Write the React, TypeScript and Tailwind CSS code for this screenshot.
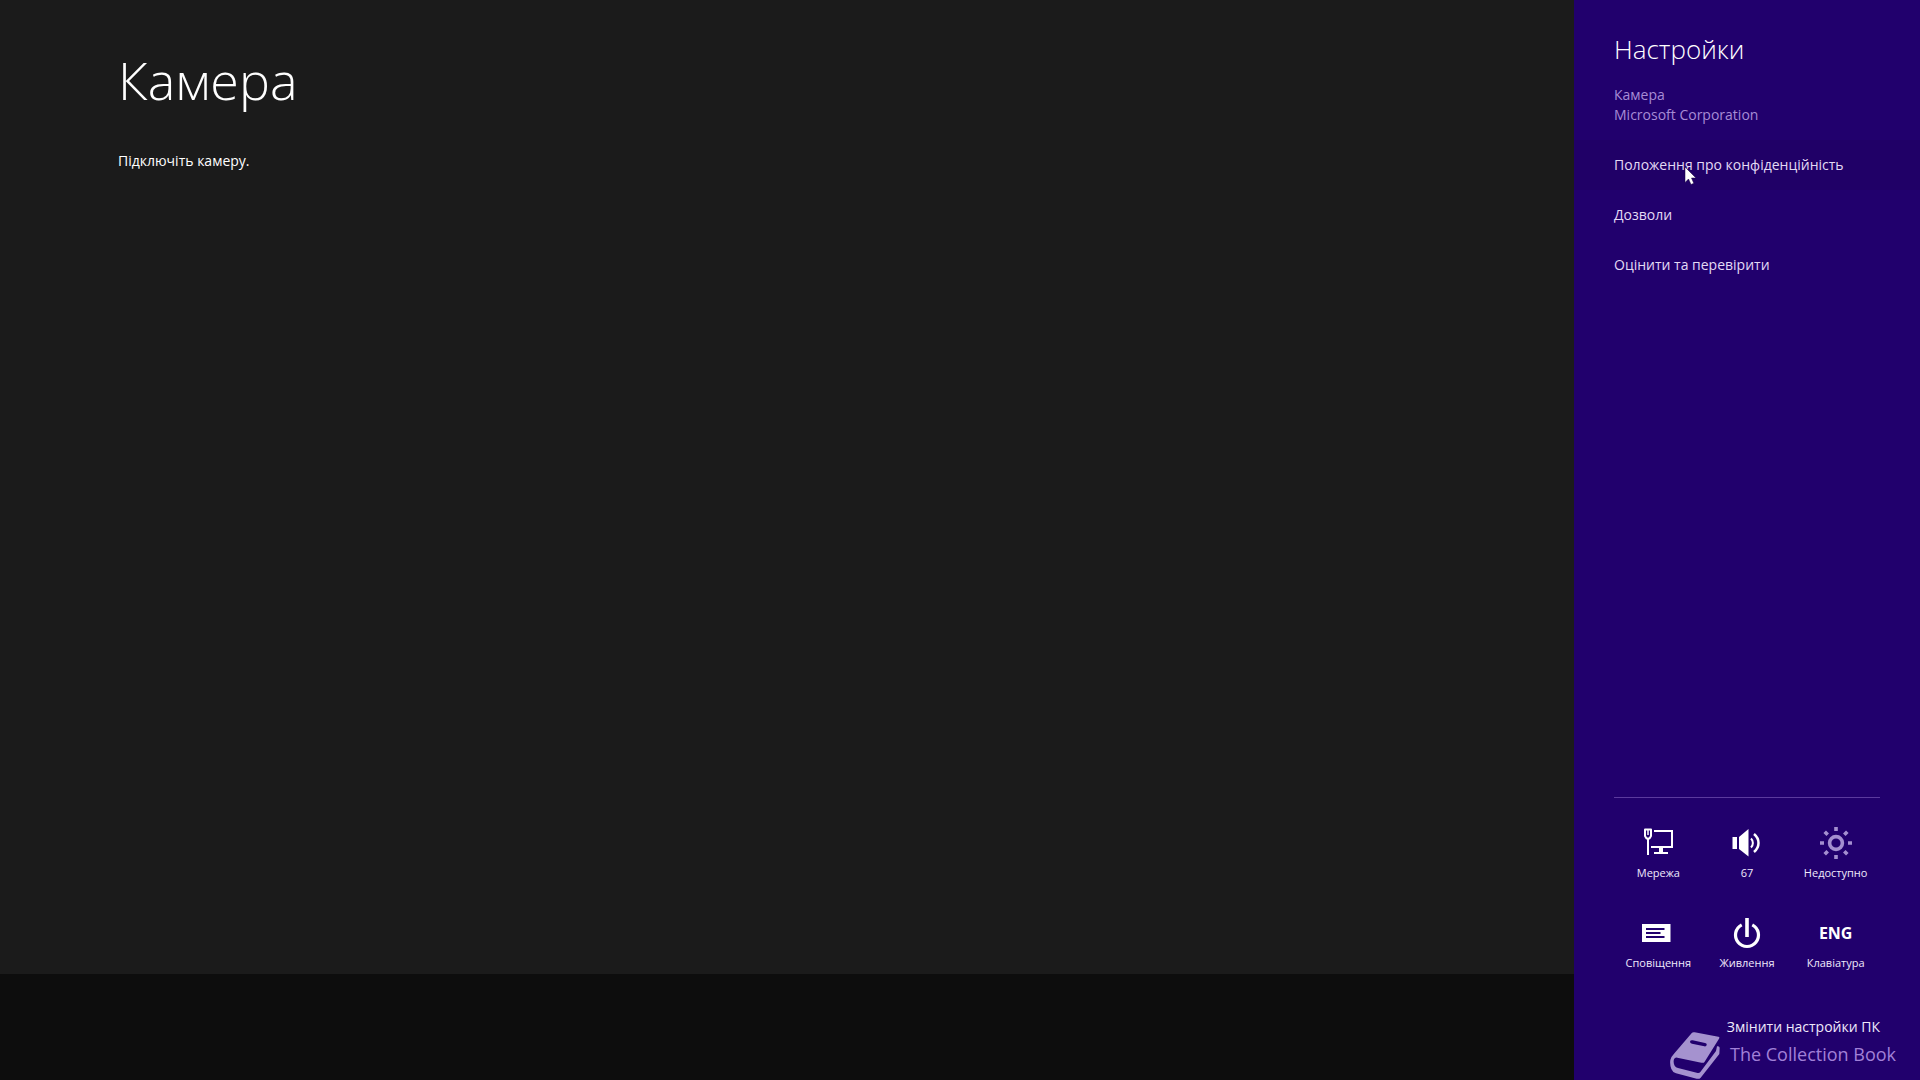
import type { ReactNode } from "react";

const links = ["Положення про конфіденційність", "Дозволи", "Оцінити та перевірити"];

function NetworkIcon() {
  return (
    <svg width="32" height="32" viewBox="0 0 32 32" fill="none" stroke="currentColor" strokeWidth="2" aria-hidden="true">
      <path d="M12 4H30V20H9" />
      <path d="M19 20V25" strokeWidth="4" />
      <path d="M12 26H26" />
      <path d="M6 12V28" />
      <path d="M3 2.500H9V9L7.500 11.500H4.500L3 9Z" strokeLinejoin="round" />
      <path d="M6 3V8" strokeWidth="1.500" />
    </svg>
  );
}

function VolumeIcon() {
  return (
    <svg width="32" height="32" viewBox="0 0 32 32" fill="none" stroke="currentColor" strokeWidth="2" aria-hidden="true">
      <path d="M1.500 10H6V22H1.500Z" fill="currentColor" stroke="none" />
      <path d="M8 10L17.500 2V29.500L8 22Z" fill="currentColor" stroke="none" />
      <path d="M20 11.500C22.500 14 22.500 18 20 20.500" />
      <path d="M23 7C29 12 29 20 23 25" strokeWidth="2.500" />
    </svg>
  );
}

function BrightnessIcon() {
  return (
    <svg width="32" height="32" viewBox="0 0 32 32" fill="none" stroke="currentColor" strokeWidth="3.600" aria-hidden="true">
      <circle cx="16" cy="16" r="6.400" />
      <path d="M16 0V4M16 28V32M0 16H4M28 16H32M4.700 4.700L7.700 7.700M24.300 24.300L27.300 27.300M4.700 27.300L7.700 24.300M24.300 7.700L27.300 4.700" />
    </svg>
  );
}

function NotificationsIcon() {
  return (
    <svg width="32" height="32" viewBox="0 0 32 32" aria-hidden="true">
      <path d="M0 7H28.500V25H0Z" fill="currentColor" />
      <path d="M4 12H22.500M4 16H18.500M4 20H22.500" stroke="#21006d" strokeWidth="2" />
    </svg>
  );
}

function PowerIcon() {
  return (
    <svg width="32" height="32" viewBox="0 0 32 32" fill="none" stroke="currentColor" strokeWidth="3.200" aria-hidden="true">
      <path d="M16 1V20" strokeWidth="3.600" />
      <path d="M10.700 7.800A11.500 11.500 0 1 0 21.300 7.800" />
    </svg>
  );
}

function BookIcon() {
  return (
    <svg width="50" height="48" viewBox="0 0 150 144" fill="currentColor" aria-hidden="true">
      <path
        fillRule="evenodd"
        d="M66 2Q68 0 74 1L145 14Q150 15 147 20L104 89Q101 94 94 92L22 77Q14 76 12 82Q9 92 14 101Q17 106 24 108L83 123Q88 124 91 120L138 57L141 43Q148 41 149 47L148 66L92 137Q87 142 80 140L18 124Q8 121 4 111Q-1 98 1 84Q3 74 12 65ZM68 25Q61 24 60 29Q60 34 66 35L103 43Q109 44 110 39Q111 34 105 33Z"
      />
    </svg>
  );
}

function Tile({ label, children, dim = false }: { label: string; children: ReactNode; dim?: boolean }) {
  return (
    <button type="button" disabled={dim} className="flex h-[90px] flex-col items-center gap-1">
      <span className={dim ? "flex h-8 items-center text-[#a48fd0]" : "flex h-8 items-center text-white"}>{children}</span>
      <span className="text-[11px] leading-5 text-[#f0eafc]">{label}</span>
    </button>
  );
}

export default function App() {
  return (
    <div className="flex min-h-screen bg-[#1b1b1b] font-['Open_Sans','Noto_Sans',sans-serif] text-white">
      <div className="flex min-w-0 flex-1 flex-col">
        <main className="flex-1 px-[118px] pt-11">
          <h1 className="text-[52px] leading-[71px] font-light">Камера</h1>
          <p className="mt-9 text-[14px] leading-5">Підключіть камеру.</p>
        </main>
        <footer className="h-[106px] bg-[#0d0d0d]" />
      </div>

      <aside className="relative flex w-[346px] shrink-0 flex-col bg-[#21006d]">
        <header className="px-10 pt-[31px]">
          <h2 className="text-[26px] leading-9 font-light text-white">Настройки</h2>
          <p className="mt-[18px] text-[14px] leading-5 text-[#a78cd6]">
            Камера
            <br />
            Microsoft Corporation
          </p>
        </header>

        <nav className="mt-[15px] flex flex-col">
          {links.map((label, i) => (
            <a
              key={label}
              href="#"
              className={
                i === 0
                  ? "relative bg-[#200067] px-10 py-[15px] text-[14px] leading-5 text-[#e3daf5]"
                  : "px-10 py-[15px] text-[14px] leading-5 text-[#e3daf5]"
              }
            >
              {label}
              {i === 0 && (
                <svg
                  className="absolute top-[26px] left-[110px]"
                  width="13"
                  height="20"
                  viewBox="0 0 13 20"
                  fill="#fff"
                  stroke="#16003f"
                  strokeWidth="0.500"
                  aria-hidden="true"
                >
                  <path d="M1 1V16.500L4.500 13L7 18.500L9.800 17.300L7.500 12H12Z" />
                </svg>
              )}
            </a>
          ))}
        </nav>

        <section className="mx-10 mt-auto border-t border-[#5b3a9e] pt-[29px]">
          <div className="grid grid-cols-3">
            <Tile label="Мережа"><NetworkIcon /></Tile>
            <Tile label="67"><VolumeIcon /></Tile>
            <Tile label="Недоступно" dim><BrightnessIcon /></Tile>
            <Tile label="Сповіщення"><NotificationsIcon /></Tile>
            <Tile label="Живлення"><PowerIcon /></Tile>
            <Tile label="Клавіатура">
              <span className="text-[16px] leading-5 font-bold">ENG</span>
            </Tile>
          </div>
        </section>

        <div className="flex justify-end px-10 pt-[10px] pb-[43px]">
          <a href="#" className="text-[14px] leading-5 text-[#efe9fb]">Змінити настройки ПК</a>
        </div>

        <div className="absolute right-6 bottom-0 flex items-start gap-[10px] text-[#a592cf]">
          <BookIcon />
          <span className="pt-[10px] text-[18px] leading-6 text-[#a180d8]">The Collection Book</span>
        </div>
      </aside>
    </div>
  );
}
